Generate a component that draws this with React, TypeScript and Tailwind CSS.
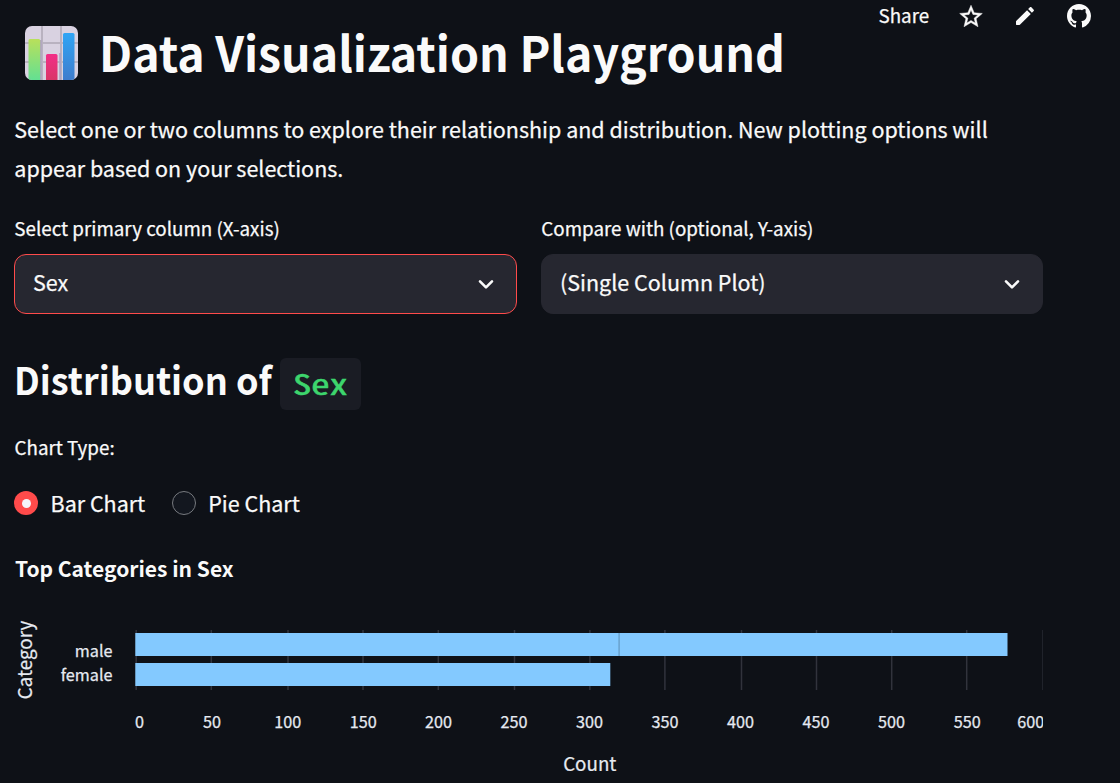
import React from "react";

const ticks = [
  { label: "0", grid: 136.2, text: 139.5 },
  { label: "50", grid: 211.3, text: 212 },
  { label: "100", grid: 288, text: 287.8 },
  { label: "150", grid: 363, text: 363.3 },
  { label: "200", grid: 438.3, text: 438.5 },
  { label: "250", grid: 514.5, text: 514 },
  { label: "300", grid: 589.9, text: 589.5 },
  { label: "350", grid: 664.9, text: 665 },
  { label: "400", grid: 741.5, text: 740.5 },
  { label: "450", grid: 816.5, text: 816 },
  { label: "500", grid: 891.7, text: 891.5 },
  { label: "550", grid: 966.7, text: 967.2 },
];

function EmojiChart() {
  return (
    <svg className="h-[54px] w-[53px]" viewBox="0 0 53 54">
      <defs>
        <linearGradient id="green" x1="0" y1="0" x2="0" y2="1">
          <stop offset="0" stopColor="#b9e05b" />
          <stop offset="1" stopColor="#5fe095" />
        </linearGradient>
        <linearGradient id="pink" x1="0" y1="0" x2="0" y2="1">
          <stop offset="0" stopColor="#f22e87" />
          <stop offset="1" stopColor="#d73665" />
        </linearGradient>
        <linearGradient id="blue" x1="0" y1="0" x2="0" y2="1">
          <stop offset="0" stopColor="#2fa5f5" />
          <stop offset="1" stopColor="#407bcb" />
        </linearGradient>
        <clipPath id="tile">
          <rect width="53" height="54" rx="7" />
        </clipPath>
      </defs>
      <g clipPath="url(#tile)">
        <rect width="53" height="54" fill="#d9d2e1" />
        <path d="M17 0V54M36 0V54M0 17H53M0 36H53" stroke="#b9b2c0" strokeWidth="2" />
        <path d="M15.8 14V54M35 27V54" stroke="#aea0c2" strokeWidth="1.5" />
        <rect x="3.5" y="13" width="11.7" height="43" rx="1.5" fill="url(#green)" />
        <rect x="21" y="28" width="11.5" height="28" rx="1.5" fill="url(#pink)" />
        <rect x="38" y="7" width="11.5" height="49" rx="1.5" fill="url(#blue)" />
      </g>
    </svg>
  );
}

function Toolbar() {
  return (
    <div className="absolute top-0 left-[878px] flex h-8 items-center text-[#fafafa]">
      <span className="w-[81px] pb-0.5 pl-[0.5px] text-[18.8px] leading-[30px]">Share</span>
      <svg className="mr-[30px] h-6 w-6" viewBox="1.4 0.9 21.2 21.2" fill="currentColor" stroke="currentColor" strokeWidth="0.4">
        <path d="M22 9.24l-7.19-.62L12 2 9.19 8.63 2 9.24l5.46 4.73L5.82 21 12 17.27 18.18 21l-1.63-7.03L22 9.24zM12 15.4l-3.76 2.27 1-4.28-3.32-2.88 4.38-.38L12 6.1l1.71 4.04 4.38.38-3.32 2.88 1 4.28L12 15.4z" />
      </svg>
      <svg className="mr-[30px] h-6 w-6" viewBox="0 0 24 24" fill="currentColor">
        <path d="M3 17.46v3.04c0 .28.22.5.5.5h3.04c.13 0 .26-.05.35-.15L17.81 9.94l-3.75-3.75L3.15 17.1c-.1.1-.15.22-.15.36zM20.71 7.04c.39-.39.39-1.02 0-1.41l-2.34-2.34c-.39-.39-1.02-.39-1.41 0l-1.83 1.83 3.75 3.75 1.83-1.83z" />
      </svg>
      <svg className="h-6 w-6" viewBox="0 0 16 16" fill="currentColor">
        <path d="M8 0C3.58 0 0 3.58 0 8c0 3.54 2.29 6.53 5.47 7.59.4.07.55-.17.55-.38 0-.19-.01-.82-.01-1.49-2.01.37-2.53-.49-2.69-.94-.09-.23-.48-.94-.82-1.13-.28-.15-.68-.52-.01-.53.63-.01 1.08.58 1.23.82.72 1.21 1.87.87 2.33.66.07-.52.28-.87.51-1.07-1.78-.2-3.64-.89-3.64-3.95 0-.87.31-1.59.82-2.15-.08-.2-.36-1.02.08-2.12 0 0 .67-.21 2.2.82.64-.18 1.32-.27 2-.27s1.36.09 2 .27c1.53-1.04 2.2-.82 2.2-.82.44 1.1.16 1.92.08 2.12.51.56.82 1.27.82 2.15 0 3.07-1.87 3.75-3.65 3.95.29.25.54.73.54 1.48 0 1.07-.01 1.93-.01 2.2 0 .21.15.46.55.38A8.01 8.01 0 0 0 16 8c0-4.42-3.58-8-8-8z" />
      </svg>
    </div>
  );
}

function Select({ label, value, active }: { label: string; value: string; active?: boolean }) {
  return (
    <div className="flex flex-col">
      <label className="h-[39px] pl-[0.3px] text-[18.8px] leading-[26px]">{label}</label>
      <div
        className={
          active
            ? "flex h-[60px] items-center justify-between rounded-xl border border-[#ff4b4b] bg-[#262730] px-[18px]"
            : "flex h-[60px] items-center justify-between rounded-xl border border-[#262730] bg-[#262730] px-[18px]"
        }
      >
        <span className="pb-1 text-[21.5px] leading-8">{value}</span>
        <svg className="h-6 w-6" viewBox="0 0 24 24" fill="none" stroke="#fafafa" strokeWidth="2.6" strokeLinecap="round" strokeLinejoin="round">
          <path d="M6 9.3l6 6 6-6" />
        </svg>
      </div>
    </div>
  );
}

function Radio({ label, checked }: { label: string; checked?: boolean }) {
  return (
    <div className="flex h-8 items-center">
      {checked ? (
        <span className="flex h-6 w-6 items-center justify-center rounded-full bg-[#ff4b4b]">
          <span className="h-[9px] w-[9px] rounded-full bg-[#f5f5fa]" />
        </span>
      ) : (
        <span className="h-6 w-6 rounded-full border-[1.5px] border-[#777a7f] bg-[#13171f]" />
      )}
      <span className="ml-[12.5px] text-[21.5px] leading-8">{label}</span>
    </div>
  );
}

function BarChart() {
  return (
    <svg className="block h-[183px] w-[1043px]" viewBox="0 600 1043 183" fill="#e6eaf1">
      <g fill="#31333c">
        {ticks.map((t) => (
          <rect key={t.label} x={t.grid - 0.75} y="630" width="1.5" height="60" />
        ))}
        <rect x="1042" y="630" width="1" height="60" fill="#20232b" />
      </g>
      <rect x="135.3" y="633" width="872.2" height="23" fill="#83c9ff" />
      <rect x="135.3" y="663" width="475" height="23" fill="#83c9ff" />
      <rect x="618.4" y="633" width="1.4" height="23" fill="#679fcb" />
      <g fontSize="16.2" stroke="#e6eaf1" strokeWidth="0.25">
        <text x="112.5" y="657" textAnchor="end">male</text>
        <text x="112.5" y="681" textAnchor="end">female</text>
        {ticks.map((t) => (
          <text key={t.label} x={t.text} y="728" textAnchor="middle">{t.label}</text>
        ))}
        <text x="1017.3" y="728">600</text>
      </g>
      <g fontSize="18.8" textAnchor="middle" stroke="#e6eaf1" strokeWidth="0.2">
        <text x="589.8" y="771">Count</text>
        <text transform="translate(32 660) rotate(-90)">Category</text>
      </g>
    </svg>
  );
}

export default function App() {
  return (
    <main className="relative h-[783px] w-[1120px] overflow-hidden bg-[#0e1117] font-['Noto_Sans_CJK_SC','Noto_Sans',sans-serif] whitespace-nowrap text-[#fafafa] [-webkit-text-stroke:0.25px]">
      <Toolbar />
      <h1 className="flex h-[109px] pt-[26px] pl-[25px] text-[49px] leading-[50px] font-bold [-webkit-text-stroke:0px]">
        <EmojiChart />
        <span className="ml-[20.5px] origin-left scale-x-[0.948]">Data Visualization Playground</span>
      </h1>
      <p className="h-[105px] pl-[14.3px] text-[21.5px] leading-[39px]">
        Select one or two columns to explore their relationship and distribution. New plotting options will
        <br />
        appear based on your selections.
      </p>
      <div className="grid h-[144px] w-[1043px] grid-cols-[503px_502px] content-start gap-6 pt-px pl-[14px]">
        <Select label="Select primary column (X-axis)" value="Sex" active />
        <Select label="Compare with (optional, Y-axis)" value="(Single Column Plot)" />
      </div>
      <h2 className="flex h-[75px] pl-[13.5px] text-[38.2px] leading-[41px] font-bold [-webkit-text-stroke:0px]">
        <span className="w-[266.5px]">
          <span className="inline-block origin-left scale-x-[0.945]">Distribution of</span>
        </span>
        <code className="flex h-[52px] w-[81px] justify-center rounded-md bg-[#1a1c24] font-['Noto_Sans_Mono_CJK_SC','DejaVu_Sans_Mono',monospace] text-[28.6px] leading-[49px] font-normal text-[#3dd56d] [-webkit-text-stroke:0.6px]">
          <span className="scale-x-[1.28]">Sex</span>
        </code>
      </h2>
      <div className="h-[54px] pl-[14.5px] text-[18.8px] leading-7">Chart Type:</div>
      <div className="flex h-[66px] gap-[26.5px] pl-[14px]">
        <Radio label="Bar Chart" checked />
        <Radio label="Pie Chart" />
      </div>
      <h3 className="h-[47px] pl-[15px] text-[21px] leading-[30px] font-bold [-webkit-text-stroke:0px]">Top Categories in Sex</h3>
      <BarChart />
    </main>
  );
}
